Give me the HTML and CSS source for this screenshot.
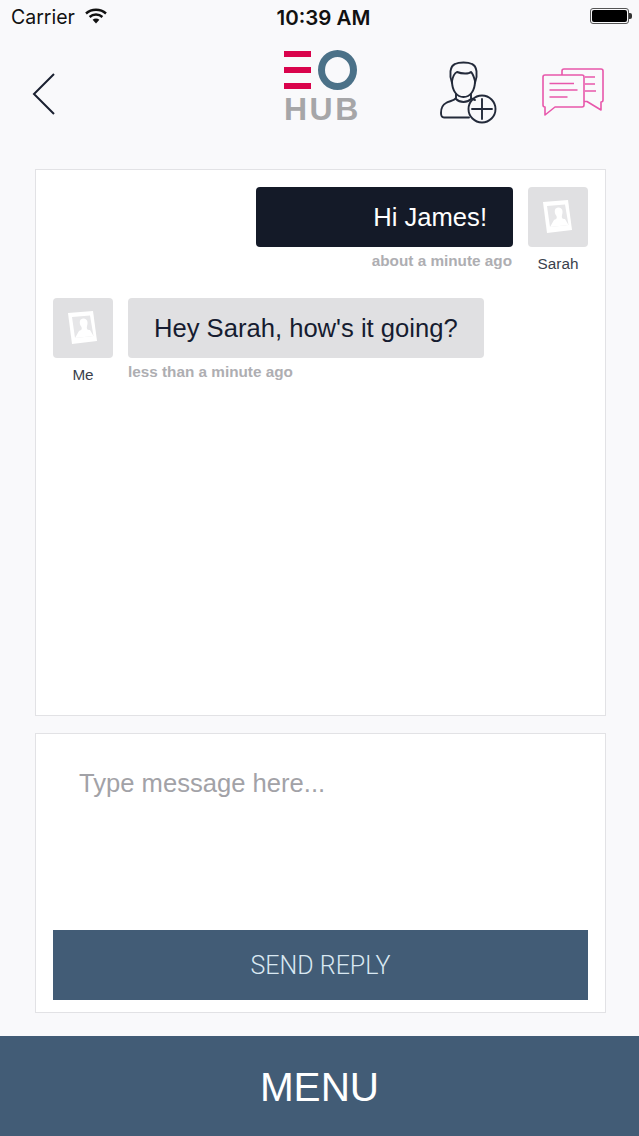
FILE: index.html
```html
<!DOCTYPE html>
<html lang="en">
<head>
    <meta charset="UTF-8">
    <meta name="viewport" content="width=device-width, initial-scale=1.0">
    <title>EO Hub Messages</title>
    <link rel="stylesheet" href="styles.css">
</head>
<body>
    <div class="status-bar">
        <div class="status-left">
            <span class="carrier">Carrier</span>
            <svg class="wifi" width="22" height="16" viewBox="0 0 22 16">
                <path d="M1 5.5C6.5 0.5 15.5 0.5 21 5.5" fill="none" stroke="#111" stroke-width="2.4"/>
                <path d="M4.6 9C8.2 5.7 13.8 5.7 17.4 9" fill="none" stroke="#111" stroke-width="2.4"/>
                <path d="M7.6 11.8C9.5 10.1 12.5 10.1 14.4 11.8L11 15.4Z" fill="#111"/>
            </svg>
        </div>
        <span class="time">10:39 AM</span>
        <div class="battery">
            <div class="battery-body"><div class="battery-fill"></div></div>
            <div class="battery-tip"></div>
        </div>
    </div>

    <div class="nav">
        <svg class="back" width="24" height="42" viewBox="0 0 24 42">
            <path d="M22 1L2 21L22 41" fill="none" stroke="#1a2030" stroke-width="2"/>
        </svg>
        <div class="logo">
            <div class="logo-mark">
                <div class="logo-bars">
                    <div class="logo-bar"></div>
                    <div class="logo-bar"></div>
                    <div class="logo-bar"></div>
                </div>
                <div class="logo-ring"></div>
            </div>
            <div class="logo-text">HUB</div>
        </div>
        <svg class="add-user" width="58" height="64" viewBox="0 0 58 64">
            <g fill="none" stroke="#232a3a" stroke-width="1.9" stroke-linecap="round" stroke-linejoin="round">
                <path d="M12 22C9 14 10 5 15 3C19 1 28 1 32 3C37 5 38 14 35 22"/>
                <path d="M12 20C12 30 17 36 23.5 36C30 36 35 30 35 20"/>
                <path d="M12 20C13 15 15 12 17 11C22 13 29 13 31 11C33 13 34 16 35 20"/>
                <path d="M16 33V37C14 40 9 40 6 42C2 44 1 48 1 52C1 55 2 56.500 4 56.500H29"/>
                <path d="M31 33V37C32 38 33 38.500 35 39"/>
                <path d="M16 38C20 42 27 42 31 38"/>
                <circle cx="42" cy="48" r="13.500"/>
                <path d="M42 38V58M32 48H52"/>
            </g>
        </svg>
        <svg class="chat" width="66" height="52" viewBox="0 0 66 52">
            <g fill="none" stroke="#e857ab" stroke-width="1.600" stroke-linejoin="round">
                <path d="M22 9V5C22 4 23 3 24 3H61C62 3 63 4 63 5V34C63 35 62 36 61 36V44L47 35.500H44"/>
                <path d="M5 9H42C43 9 44 10 44 11V39C44 40 43 41 42 41H15L5 49V41C3.500 41 3 40 3 39V11C3 10 4 9 5 9Z"/>
                <path d="M9.500 17.500H34M9.500 24H37.500M9.500 31H27.500"/>
                <path d="M45 11H55M45 18H55M45 25H56"/>
            </g>
        </svg>
    </div>

    <div class="content">
        <div class="panel thread">
            <div class="message message-other">
                <div class="message-body">
                    <div class="bubble bubble-dark">Hi James!</div>
                    <div class="timestamp">about a minute ago</div>
                </div>
                <div class="sender">
                    <div class="avatar">
                        <svg width="60" height="60" viewBox="0 0 60 60">
                            <path d="M15 15L40 13L44 43L19 46Z" fill="#fff"/>
                            <path d="M19 19L37 17.500L40.500 38L22 40Z" fill="#e6e6e8"/>
                            <path d="M22 40L26 33C29 32 29 31 28.500 29C26 26 26 21 30 20.500C34 20 35.500 24 34 28C33.500 31 34 32 37 32L40.500 38Z" fill="#fff"/>
                        </svg>
                    </div>
                    <div class="sender-name">Sarah</div>
                </div>
            </div>
            <div class="message">
                <div class="sender">
                    <div class="avatar">
                        <svg width="60" height="60" viewBox="0 0 60 60">
                            <path d="M15 15L40 13L44 43L19 46Z" fill="#fff"/>
                            <path d="M19 19L37 17.500L40.500 38L22 40Z" fill="#e6e6e8"/>
                            <path d="M22 40L26 33C29 32 29 31 28.500 29C26 26 26 21 30 20.500C34 20 35.500 24 34 28C33.500 31 34 32 37 32L40.500 38Z" fill="#fff"/>
                        </svg>
                    </div>
                    <div class="sender-name">Me</div>
                </div>
                <div class="message-body">
                    <div class="bubble bubble-light">Hey Sarah, how's it going?</div>
                    <div class="timestamp">less than a minute ago</div>
                </div>
            </div>
        </div>

        <div class="panel compose">
            <div class="placeholder">Type message here...</div>
            <button class="send">SEND REPLY</button>
        </div>
    </div>

    <div class="menu">MENU</div>
</body>
</html>
```

FILE: styles.css
```css
* {
    box-sizing: border-box;
}

body {
    margin: 0;
    height: 1136px;
    display: flex;
    flex-direction: column;
    background-color: #f9f9fb;
    font-family: "Liberation Sans", Arial, sans-serif;
    overflow: hidden;
}

.status-bar {
    height: 34px;
    padding: 0 7px 0 11px;
    display: grid;
    grid-template-columns: 1fr auto 1fr;
    align-items: center;
    font-family: Inter, "Liberation Sans", sans-serif;
    color: #111;
}

.status-left {
    display: flex;
    align-items: center;
    gap: 10px;
}

.carrier {
    font-size: 19.500px;
}

.time {
    font-size: 20.500px;
    font-weight: 600;
    margin-left: 4px;
}

.wifi {
    margin-bottom: 3px;
}

.battery {
    justify-self: end;
    margin-bottom: 2px;
    display: flex;
    align-items: center;
}

.battery-body {
    width: 39px;
    height: 16px;
    padding: 1px;
    border: 1px solid #555;
    border-radius: 3px;
}

.battery-fill {
    height: 100%;
    background-color: #000;
    border-radius: 2px;
}

.battery-tip {
    width: 3px;
    height: 6px;
    background-color: #333;
    border-radius: 0 2px 2px 0;
}

.nav {
    height: 135px;
    display: flex;
    align-items: flex-start;
    padding: 16px 33px 0 32px;
}

.nav > * {
    flex-shrink: 0;
}

.back {
    margin-top: 23px;
}

.logo {
    margin-left: 228px;
    width: 73px;
}

.logo-mark {
    display: flex;
    justify-content: space-between;
}

.logo-bars {
    width: 27px;
    padding-top: 1px;
    display: flex;
    flex-direction: column;
    gap: 10px;
}

.logo-bar {
    height: 6px;
    background-color: #d9034c;
}

.logo-ring {
    width: 39px;
    height: 40px;
    border: 7px solid #4b7188;
    border-radius: 50%;
}

.logo-text {
    margin-top: 4px;
    font-size: 32px;
    line-height: 31px;
    font-weight: 700;
    color: #a6a6a8;
    letter-spacing: 2.500px;
}

.add-user {
    margin: 11px 0 0 83px;
}

.chat {
    margin: 16px 0 0 42px;
}

.content {
    flex: 1;
    padding: 0 33px 0 35px;
    display: flex;
    flex-direction: column;
    gap: 17px;
}

.panel {
    background-color: #fff;
    border: 1.500px solid #e2e2e5;
}

.thread {
    height: 547px;
    padding: 17px;
    display: flex;
    flex-direction: column;
    gap: 25px;
}

.message {
    display: flex;
    gap: 15px;
}

.message-other {
    justify-content: flex-end;
}

.message-body {
    display: flex;
    flex-direction: column;
}

.bubble {
    height: 60px;
    padding: 0 26px;
    display: flex;
    align-items: center;
    font-size: 25.600px;
    border-radius: 4px;
}

.bubble-dark {
    width: 257px;
    justify-content: flex-end;
    background-color: #141a28;
    color: #fff;
}

.bubble-light {
    background-color: #e0e0e2;
    color: #161c30;
}

.timestamp {
    margin-top: 5px;
    font-size: 15.300px;
    font-weight: 700;
    color: #aeaeb2;
}

.message-other .timestamp {
    text-align: right;
    padding-right: 1px;
}

.sender {
    width: 60px;
}

.avatar {
    width: 60px;
    height: 60px;
    background-color: #e0e0e2;
    border-radius: 4px;
}

.sender-name {
    margin-top: 8px;
    text-align: center;
    font-size: 15.300px;
    color: #3a3f4c;
}

.compose {
    height: 280px;
    padding: 35px 17px 12px;
    display: flex;
    flex-direction: column;
    justify-content: space-between;
}

.placeholder {
    padding-left: 26px;
    font-size: 25.600px;
    color: #a2a2a7;
}

.send {
    height: 70px;
    border: none;
    background-color: #425c76;
    color: #d9e8f2;
    font-family: Roboto, "Liberation Sans", sans-serif;
    font-size: 25px;
    font-weight: 300;
}

.menu {
    height: 100px;
    margin-top: 23px;
    padding-top: 2px;
    display: flex;
    align-items: center;
    justify-content: center;
    background-color: #425c76;
    color: #fff;
    font-size: 40.500px;
}
```
